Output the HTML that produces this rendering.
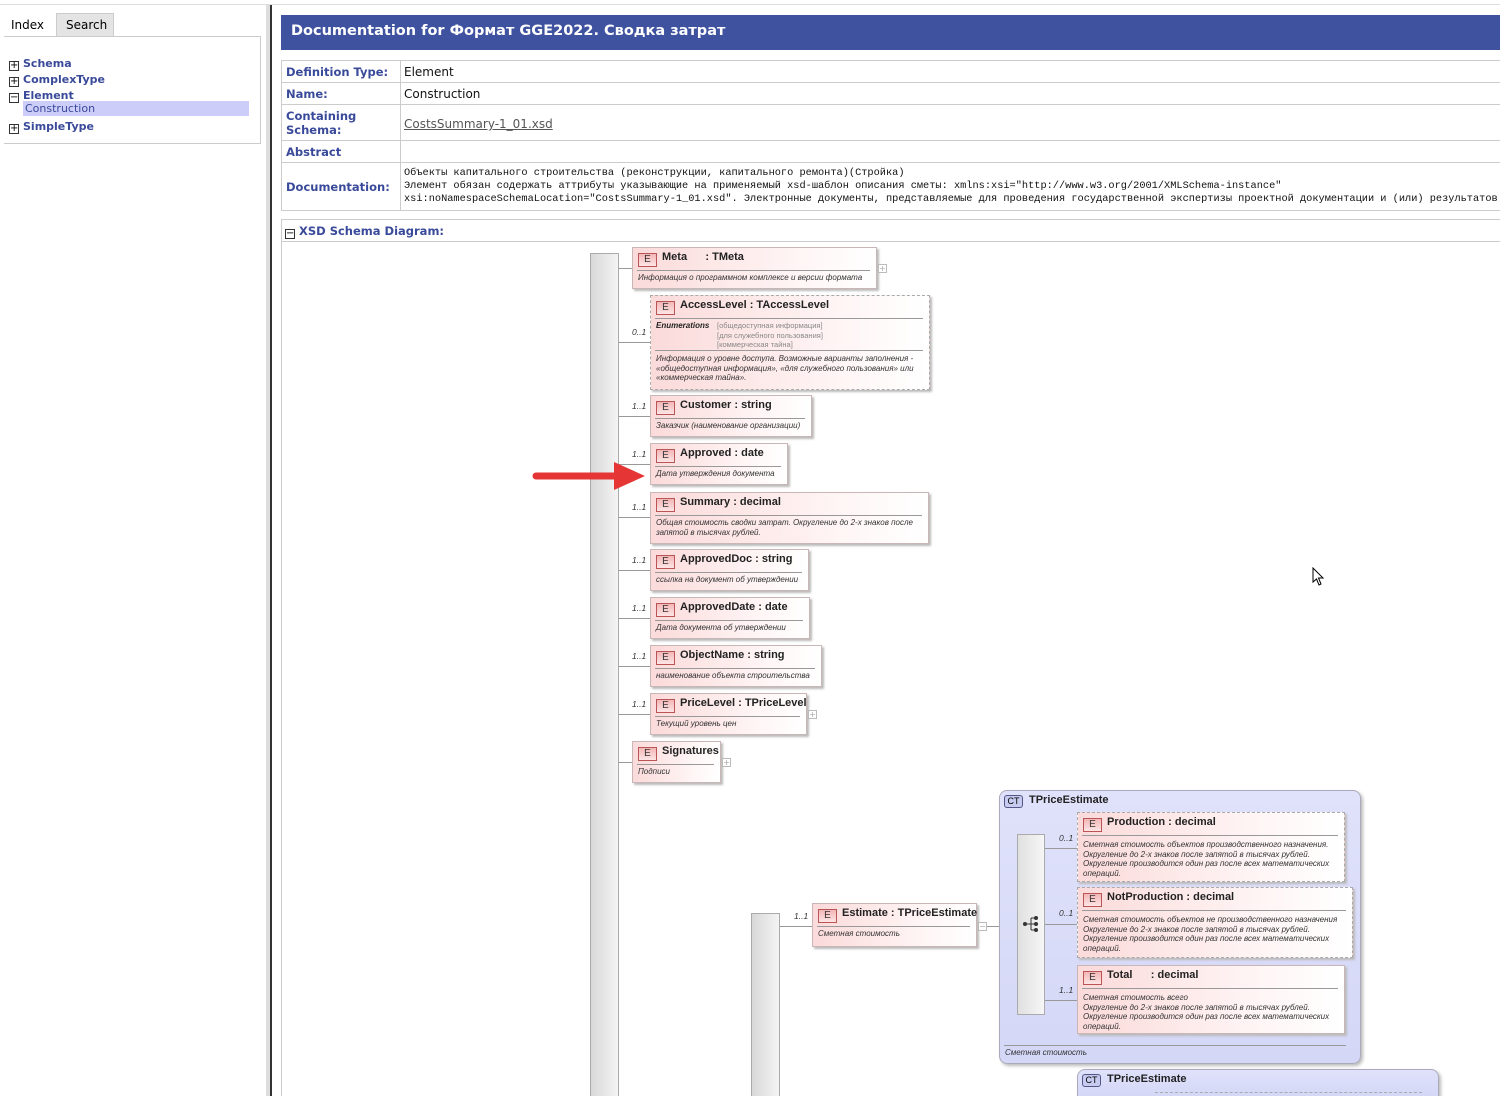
<!DOCTYPE html>
<html style="width:1500px;height:1096px;overflow:hidden"><head><meta charset="utf-8"><style>
*{margin:0;padding:0;box-sizing:border-box}
body{width:1500px;height:1096px;overflow:hidden;background:#fff;font-family:"DejaVu Sans","Liberation Sans",sans-serif;position:relative}
.a{position:absolute}
.lbl{color:#3a4a9a;font-weight:bold;font-size:11.5px;font-family:"DejaVu Sans",sans-serif}
.val{font-size:12px;color:#111}
.el{position:absolute;background:linear-gradient(to right,#fbdada,#fff6f6 70%,#fff);border:1px solid #c9b7b7;box-shadow:2px 2px 2px #bbb;font-family:"Liberation Sans",sans-serif}
.el.d{border:1px dashed #aaa}
.el .b{position:absolute;left:5px;top:5px;width:19px;height:14px;border:1px solid #b55;background:linear-gradient(#f3b6b6,#fde5e5);font-size:10px;line-height:12px;text-align:center;color:#333}
.el .t{position:absolute;left:29px;top:3px;font-size:11px;font-weight:bold;color:#222;white-space:pre}
.el .hr{position:absolute;left:4px;right:6px;top:22px;border-top:1px solid #999}
.el .ds{position:absolute;left:5px;top:25px;font-size:8px;font-style:italic;color:#333;line-height:9.5px;white-space:pre}
.occ{position:absolute;font-size:8.5px;font-style:italic;color:#333;font-family:"Liberation Sans",sans-serif}
.hl{position:absolute;height:1px;background:#999}
.bar{position:absolute;background:linear-gradient(to right,#d8d8d8,#f4f4f4);border:1px solid #aaa}
.pl{position:absolute;width:9px;height:9px;border:1px solid #bbb;font-size:8px;line-height:7px;text-align:center;color:#aaa;background:#fff}
.ct{position:absolute;background:linear-gradient(#e0e2fb,#d4d7f6);border:1px solid #aab;border-radius:8px;box-shadow:2px 2px 3px #bbb;font-family:"Liberation Sans",sans-serif}
.ct .cb{position:absolute;left:4px;top:4px;width:19px;height:13px;border:1px solid #558;border-radius:3px;background:#c8cbf0;font-size:9px;line-height:11px;text-align:center}
.ct .ctt{position:absolute;left:29px;top:3px;font-size:11px;font-weight:bold;color:#222}
.tree{font-size:11px;font-weight:bold;color:#3a4a9a}
.pm{display:inline-block;width:10px;height:10px;border:1px solid #333;font-size:10px;line-height:8px;text-align:center;color:#000;font-weight:normal;margin-right:4px;vertical-align:-1px}
</style></head><body>
<div class="a" style="left:0;top:4px;width:1500px;height:1px;background:#ddd"></div>
<!-- left pane -->
<div class="a" style="left:4px;top:14px;width:50px;height:23px;font-size:12px;padding:4px 7px">Index</div>
<div class="a" style="left:56px;top:13px;width:58px;height:24px;background:#e4e4e4;border:1px solid #ccc;border-bottom:none;font-size:12px;padding:4px 9px">Search</div>
<div class="a" style="left:4px;top:36px;width:257px;height:108px;border:1px solid #ccc;border-left:none"></div>
<div class="a tree" style="left:9px;top:57px"><span class="pm">+</span>Schema</div>
<div class="a tree" style="left:9px;top:73px"><span class="pm">+</span>ComplexType</div>
<div class="a tree" style="left:9px;top:89px"><span class="pm">−</span>Element</div>
<div class="a" style="left:23px;top:101px;width:226px;height:15px;background:#cccdf8;font-size:11px;color:#3a4a9a;padding:1px 2px">Construction</div>
<div class="a tree" style="left:9px;top:120px"><span class="pm">+</span>SimpleType</div>
<div class="a" style="left:266px;top:5px;width:4px;height:1091px;background:#ddd"></div>
<div class="a" style="left:270px;top:5px;width:2px;height:1091px;background:#333"></div>
<!-- header -->
<div class="a" style="left:281px;top:15px;width:1219px;height:35px;background:#3e52a0;color:#fff;font-weight:bold;font-size:14.5px;padding:8px 10px;font-family:'DejaVu Sans',sans-serif">Documentation for Формат GGE2022. Сводка затрат</div>
<!-- table -->
<div class="a" style="left:281px;top:60px;width:1219px;height:151px;border:1px solid #ccc;border-right:none"></div>
<div class="a" style="left:400px;top:60px;width:1px;height:151px;background:#ccc"></div>
<div class="a" style="left:281px;top:82px;width:1219px;height:1px;background:#ccc"></div>
<div class="a" style="left:281px;top:104px;width:1219px;height:1px;background:#ccc"></div>
<div class="a" style="left:281px;top:140px;width:1219px;height:1px;background:#ccc"></div>
<div class="a" style="left:281px;top:162px;width:1219px;height:1px;background:#ccc"></div>
<div class="a lbl" style="left:286px;top:65px">Definition Type:</div>
<div class="a val" style="left:404px;top:65px">Element</div>
<div class="a lbl" style="left:286px;top:87px">Name:</div>
<div class="a val" style="left:404px;top:87px">Construction</div>
<div class="a lbl" style="left:286px;top:109px;line-height:14px">Containing<br>Schema:</div>
<div class="a val" style="left:404px;top:117px;color:#555;text-decoration:underline">CostsSummary-1_01.xsd</div>
<div class="a lbl" style="left:286px;top:145px">Abstract</div>
<div class="a lbl" style="left:286px;top:180px">Documentation:</div>
<div class="a" style="left:404px;top:167px;font-family:'Liberation Mono',monospace;font-size:10.3px;line-height:13px;white-space:pre;color:#111">Объекты капитального строительства (реконструкции, капитального ремонта)(Стройка)
Элемент обязан содержать аттрибуты указывающие на применяемый xsd-шаблон описания сметы: xmlns:xsi="http://www.w3.org/2001/XMLSchema-instance"
xsi:noNamespaceSchemaLocation="CostsSummary-1_01.xsd". Электронные документы, представляемые для проведения государственной экспертизы проектной документации и (или) результатов инж</div>
<!-- xsd section -->
<div class="a" style="left:281px;top:219px;width:1219px;height:877px;border-left:1px solid #ccc;border-top:1px solid #ccc"></div>
<div class="a" style="left:281px;top:241px;width:1219px;height:1px;background:#ccc"></div>
<div class="a lbl" style="left:285px;top:224px"><span class="pm">−</span>XSD Schema Diagram:</div>
<!-- main bar -->
<div class="bar" style="left:590px;top:253px;width:29px;height:843px;border-bottom:none"></div>
<div class="hl" style="left:619px;top:268px;width:13px"></div>
<div class="hl" style="left:619px;top:342px;width:31px"></div>
<div class="hl" style="left:619px;top:416px;width:31px"></div>
<div class="hl" style="left:619px;top:464px;width:31px"></div>
<div class="hl" style="left:619px;top:517px;width:31px"></div>
<div class="hl" style="left:619px;top:570px;width:31px"></div>
<div class="hl" style="left:619px;top:618px;width:31px"></div>
<div class="hl" style="left:619px;top:666px;width:31px"></div>
<div class="hl" style="left:619px;top:714px;width:31px"></div>
<div class="hl" style="left:619px;top:762px;width:13px"></div>

<div class="el" style="left:632px;top:247px;width:245px;height:42px"><div class="b">E</div><div class="t">Meta      : TMeta</div><div class="hr"></div><div class="ds">Информация о программном комплексе и версии формата</div></div>
<div class="pl" style="left:878px;top:264px">+</div>

<div class="occ" style="left:632px;top:327px">0..1</div>
<div class="el d" style="left:650px;top:295px;width:280px;height:95px"><div class="b">E</div><div class="t">AccessLevel : TAccessLevel</div><div class="hr"></div>
<div class="ds" style="font-weight:bold;color:#222">Enumerations</div>
<div class="ds" style="left:66px;font-style:normal;color:#888;font-size:7.5px">[общедоступная информация]
[для служебного пользования]
[коммерческая тайна]</div>
<div class="a" style="left:4px;right:6px;top:54px;border-top:1px solid #999"></div>
<div class="ds" style="top:58px">Информация о уровне доступа. Возможные варианты заполнения -
«общедоступная информация», «для служебного пользования» или
«коммерческая тайна».</div></div>

<div class="occ" style="left:632px;top:401px">1..1</div>
<div class="el" style="left:650px;top:395px;width:162px;height:42px"><div class="b">E</div><div class="t">Customer : string</div><div class="hr"></div><div class="ds">Заказчик (наименование организации)</div></div>

<div class="occ" style="left:632px;top:449px">1..1</div>
<div class="el" style="left:650px;top:443px;width:138px;height:42px"><div class="b">E</div><div class="t">Approved : date</div><div class="hr"></div><div class="ds">Дата утверждения документа</div></div>

<div class="occ" style="left:632px;top:502px">1..1</div>
<div class="el" style="left:650px;top:492px;width:279px;height:52px"><div class="b">E</div><div class="t">Summary : decimal</div><div class="hr"></div><div class="ds">Общая стоимость сводки затрат. Округление до 2-х знаков после
запятой в тысячах рублей.</div></div>

<div class="occ" style="left:632px;top:555px">1..1</div>
<div class="el" style="left:650px;top:549px;width:159px;height:42px"><div class="b">E</div><div class="t">ApprovedDoc : string</div><div class="hr"></div><div class="ds">ссылка на документ об утверждении</div></div>

<div class="occ" style="left:632px;top:603px">1..1</div>
<div class="el" style="left:650px;top:597px;width:160px;height:42px"><div class="b">E</div><div class="t">ApprovedDate : date</div><div class="hr"></div><div class="ds">Дата документа об утверждении</div></div>

<div class="occ" style="left:632px;top:651px">1..1</div>
<div class="el" style="left:650px;top:645px;width:172px;height:42px"><div class="b">E</div><div class="t">ObjectName : string</div><div class="hr"></div><div class="ds">наименование объекта строительства</div></div>

<div class="occ" style="left:632px;top:699px">1..1</div>
<div class="el" style="left:650px;top:693px;width:157px;height:42px"><div class="b">E</div><div class="t">PriceLevel : TPriceLevel</div><div class="hr"></div><div class="ds">Текущий уровень цен</div></div>
<div class="pl" style="left:808px;top:710px">+</div>

<div class="el" style="left:632px;top:741px;width:89px;height:42px"><div class="b">E</div><div class="t">Signatures</div><div class="hr"></div><div class="ds">Подписи</div></div>
<div class="pl" style="left:722px;top:758px">+</div>

<!-- arrow -->
<svg class="a" style="left:528px;top:460px" width="120" height="32"><line x1="8" y1="16" x2="92" y2="16" stroke="#e53535" stroke-width="7" stroke-linecap="round"/><polygon points="86,2 117,16 86,30" fill="#e53535"/></svg>

<!-- cursor -->
<svg class="a" style="left:1312px;top:567px" width="14" height="20"><path d="M1 1 L1 15 L4.5 12 L7 18 L9 17 L6.5 11 L11 11 Z" fill="#fff" stroke="#000" stroke-width="1"/></svg>

<!-- second bar -->
<div class="bar" style="left:751px;top:913px;width:29px;height:183px;border-bottom:none"></div>
<div class="hl" style="left:780px;top:926px;width:32px"></div>
<div class="occ" style="left:794px;top:911px">1..1</div>
<div class="el" style="left:812px;top:903px;width:165px;height:44px"><div class="b">E</div><div class="t">Estimate : TPriceEstimate</div><div class="hr"></div><div class="ds">Сметная стоимость</div></div>
<div class="pl" style="left:978px;top:922px">−</div>
<div class="hl" style="left:987px;top:926px;width:30px"></div>

<div class="ct" style="left:999px;top:790px;width:362px;height:274px"><div class="cb">CT</div><div class="ctt">TPriceEstimate</div>
<div class="a" style="left:4px;right:14px;top:254px;border-top:1px solid #999"></div>
<div class="a" style="left:5px;top:257px;font-size:8px;font-style:italic;color:#333">Сметная стоимость</div></div>
<div class="bar" style="left:1017px;top:834px;width:28px;height:181px;background:linear-gradient(to right,#e0e0e0,#f6f6f6)"></div>
<svg class="a" style="left:1021px;top:915px" width="20" height="20"><circle cx="4" cy="9" r="2" fill="#333"/><line x1="4" y1="9" x2="10" y2="9" stroke="#333"/><path d="M10 3V15M10 3H14M10 9H14M10 15H14" stroke="#333" fill="none"/><circle cx="15" cy="3" r="2" fill="#333"/><circle cx="15" cy="9" r="2" fill="#333"/><circle cx="15" cy="15" r="2" fill="#333"/></svg>
<div class="hl" style="left:1045px;top:848px;width:32px"></div>
<div class="hl" style="left:1045px;top:924px;width:32px"></div>
<div class="hl" style="left:1045px;top:1000px;width:32px"></div>
<div class="occ" style="left:1059px;top:833px">0..1</div>
<div class="occ" style="left:1059px;top:908px">0..1</div>
<div class="occ" style="left:1059px;top:985px">1..1</div>

<div class="el d" style="left:1077px;top:812px;width:268px;height:70px"><div class="b">E</div><div class="t">Production : decimal</div><div class="hr"></div><div class="ds" style="top:27px">Сметная стоимость объектов производственного назначения.
Округление до 2-х знаков после запятой в тысячах рублей.
Округление производится один раз после всех математических
операций.</div></div>
<div class="el d" style="left:1077px;top:887px;width:276px;height:71px"><div class="b">E</div><div class="t">NotProduction : decimal</div><div class="hr"></div><div class="ds" style="top:27px">Сметная стоимость объектов не производственного назначения
Округление до 2-х знаков после запятой в тысячах рублей.
Округление производится один раз после всех математических
операций.</div></div>
<div class="el" style="left:1077px;top:965px;width:268px;height:69px"><div class="b">E</div><div class="t">Total      : decimal</div><div class="hr"></div><div class="ds" style="top:27px">Сметная стоимость всего
Округление до 2-х знаков после запятой в тысячах рублей.
Округление производится один раз после всех математических
операций.</div></div>

<div class="ct" style="left:1077px;top:1069px;width:362px;height:27px;border-bottom:none;border-radius:8px 8px 0 0"><div class="cb">CT</div><div class="ctt">TPriceEstimate</div>
<div class="a" style="left:77px;right:16px;top:22px;border-top:1px dashed #aaa"></div></div>
</body></html>
